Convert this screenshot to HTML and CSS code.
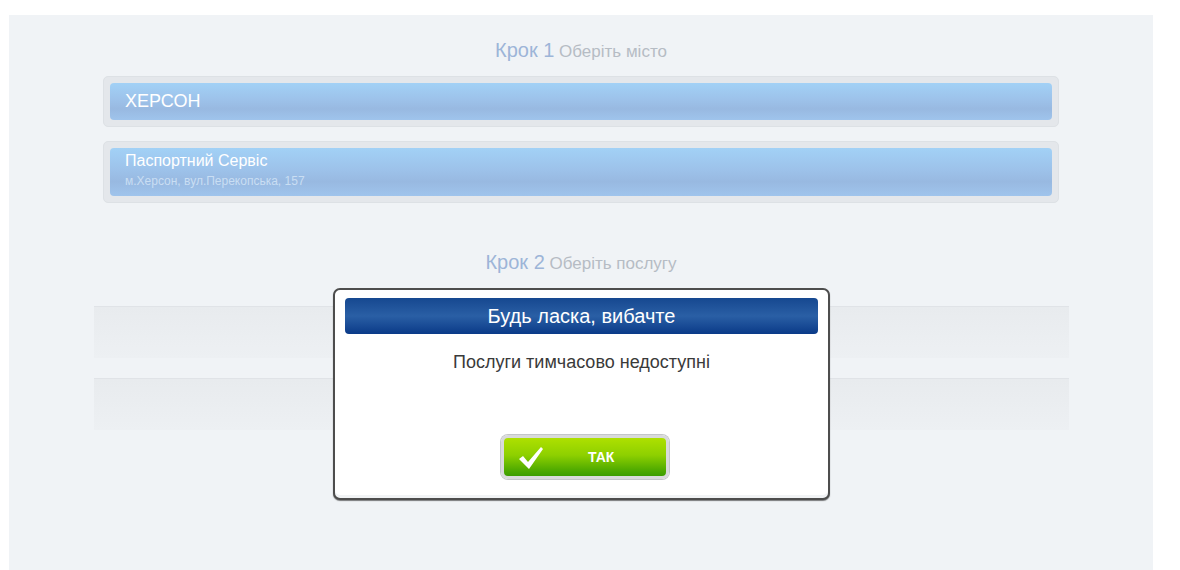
FILE: index.html
```html
<!DOCTYPE html>
<html lang="uk">
<head>
  <meta charset="UTF-8" />
  <title>Електронна черга</title>
  <link rel="stylesheet" href="styles.css">
</head>
<body>
  <div class="page">
    <h2 class="step-title"><span class="step-num">Крок 1</span> Оберіть місто</h2>
    <div class="choice">
      <div class="choice-inner city">ХЕРСОН</div>
    </div>
    <div class="choice">
      <div class="choice-inner office">
        <div class="office-name">Паспортний Сервіс</div>
        <div class="office-addr">м.Херсон, вул.Перекопська, 157</div>
      </div>
    </div>

    <h2 class="step-title step-2"><span class="step-num">Крок 2</span> Оберіть послугу</h2>
    <div class="stripes">
      <div class="stripe"></div>
      <div class="stripe"></div>
    </div>
  </div>

  <div class="modal">
    <div class="modal-head">Будь ласка, вибачте</div>
    <div class="modal-text">Послуги тимчасово недоступні</div>
    <div class="modal-actions">
      <button class="btn-ok">
        <svg class="check" width="26" height="24" viewBox="0 0 26 24">
          <path d="M1 13 L5 10 L10 16 L23 1 L25 3 L11 23 Z" fill="#fff"/>
        </svg>
        <span>ТАК</span>
      </button>
    </div>
  </div>
</body>
</html>
```

FILE: styles.css
```css
* {
  box-sizing: border-box;
}

body {
  margin: 0;
  background: #fff;
  font-family: 'Liberation Sans', Arial, sans-serif;
  height: 570px;
  overflow: hidden;
  position: relative;
}

.page {
  margin: 15px 27px 0 9px;
  height: 555px;
  background: #f0f3f6;
  padding-top: 23px;
}

.step-title {
  margin: 0;
  text-align: center;
  font-size: 17px;
  font-weight: normal;
  color: #b6bcc4;
  line-height: 24px;
}

.step-num {
  font-size: 20px;
  color: #9db5d8;
}

.choice {
  width: 956px;
  margin: 12px auto 0;
  padding: 6px;
  background: #e4e7eb;
  border: 1px solid #dde1e5;
  border-radius: 5px;
}

.choice + .choice {
  margin-top: 14px;
}

.choice-inner {
  border-radius: 4px;
  background: linear-gradient(to bottom, #a2d1f6 0%, #9dc2ea 45%, #98b9e1 70%, #9fc4ec 100%);
  color: #fff;
  padding: 0 15px;
}

.city {
  height: 37px;
  line-height: 37px;
  font-size: 18px;
}

.office {
  height: 48px;
  padding-top: 3px;
}

.office-name {
  font-size: 16px;
  line-height: 20px;
}

.office-addr {
  font-size: 12px;
  color: #c9def3;
  margin-top: 3px;
}

.step-2 {
  margin-top: 47px;
}

.stripes {
  width: 975px;
  margin: 30px auto 0;
  display: flex;
  flex-direction: column;
  gap: 20px;
}

.stripe {
  height: 52px;
  background: linear-gradient(to bottom, #e8ebee, #edf0f3);
  border-top: 1px solid #e0e3e7;
}

.modal {
  position: absolute;
  left: 333px;
  top: 288px;
  width: 497px;
  height: 212px;
  background: #fff;
  border: 2px solid #4d4d4d;
  border-radius: 7px;
  box-shadow: 0 1px 1px rgba(0, 0, 0, 0.5), inset 0 -3px 0 #f1f3f5;
  padding: 8px 10px;
}

.modal-head {
  height: 36px;
  line-height: 36px;
  border-radius: 4px;
  background: linear-gradient(to bottom, #164890 0%, #2a5fa5 50%, #0a3a88 100%);
  color: #fff;
  text-align: center;
  font-size: 20px;
}

.modal-text {
  text-align: center;
  font-size: 18px;
  color: #3a3a3a;
  margin-top: 18px;
}

.modal-actions {
  display: flex;
  justify-content: center;
  padding-left: 7px;
  margin-top: 62px;
}

.btn-ok {
  width: 168px;
  height: 44px;
  padding: 0;
  border: 3px solid #d9dadb;
  border-radius: 7px;
  background: linear-gradient(to bottom, #aee000 0%, #8ed000 45%, #4faa00 85%, #3c9d00 100%);
  box-shadow: 0 0 0 1px #c4c6c8;
  color: #fff;
  font-family: 'Liberation Sans', Arial, sans-serif;
  font-size: 14px;
  font-weight: bold;
  display: flex;
  align-items: center;
  position: relative;
  cursor: pointer;
}

.check {
  margin-left: 14px;
  margin-top: 1px;
}

.btn-ok span {
  margin-left: 44px;
}
```
